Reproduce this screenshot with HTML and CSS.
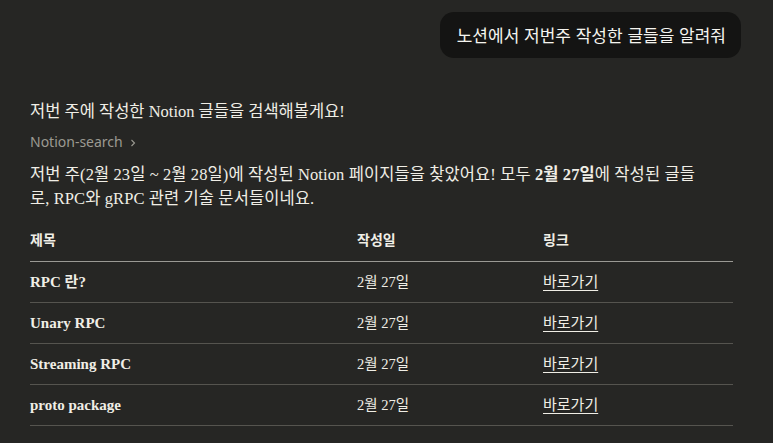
FILE: index.html
```html
<!DOCTYPE html>
<html lang="ko">
<head>
<meta charset="utf-8">
<link rel="stylesheet" href="styles.css">
</head>
<body>
<div class="chat">
  <div class="user-row">
    <div class="bubble">노션에서 저번주 작성한 글들을 알려줘</div>
  </div>
  <div class="reply">
    <p class="lead">저번 주에 작성한 Notion 글들을 검색해볼게요!</p>
    <div class="tool">Notion-search <svg class="chev" width="8" height="10" viewBox="0 0 8 10"><path d="M2.5 2 L5.5 5 L2.5 8" fill="none" stroke="currentColor" stroke-width="1.1"/></svg></div>
    <p class="text">저번 주(2월 23일 ~ 2월 28일)에 작성된 Notion 페이지들을 찾았어요! 모두 <strong>2월 27일</strong>에 작성된 글들로, RPC와 gRPC 관련 기술 문서들이네요.</p>
    <table class="posts">
      <colgroup><col class="c1"><col class="c2"><col class="c3"></colgroup>
      <thead>
        <tr><th>제목</th><th>작성일</th><th>링크</th></tr>
      </thead>
      <tbody>
        <tr><td class="title">RPC 란?</td><td class="date">2월 27일</td><td><a class="link">바로가기</a></td></tr>
        <tr><td class="title">Unary RPC</td><td class="date">2월 27일</td><td><a class="link">바로가기</a></td></tr>
        <tr><td class="title">Streaming RPC</td><td class="date">2월 27일</td><td><a class="link">바로가기</a></td></tr>
        <tr><td class="title">proto package</td><td class="date">2월 27일</td><td><a class="link">바로가기</a></td></tr>
      </tbody>
    </table>
  </div>
</div>
</body>
</html>
```

FILE: styles.css
```css
html, body {
  margin: 0;
  padding: 0;
  background: #262624;
  color: #f0eee6;
  font-family: "Liberation Serif", "Noto Sans CJK KR", serif;
}
.chat {
  width: 773px;
  height: 443px;
  overflow: hidden;
}
.user-row {
  display: flex;
  justify-content: flex-end;
  padding: 12px 32px 0 0;
}
.bubble {
  background: #141413;
  border-radius: 14px;
  padding: 12px 15px 12px 17px;
  font-family: "Noto Sans CJK KR", "Noto Sans", sans-serif;
  font-size: 17px;
  line-height: 22px;
  color: #f5f4ef;
}
.reply {
  padding: 42px 40px 0 30px;
}
.lead {
  margin: 0;
  font-size: 16.5px;
  line-height: 24px;
}
.tool {
  margin-top: 8px;
  font-family: "Noto Sans", "Noto Sans CJK KR", sans-serif;
  font-size: 14px;
  line-height: 20px;
  color: #9c9a92;
  display: flex;
  align-items: center;
  gap: 6px;
}
.chev { margin-top: 1px; }
.text {
  margin: 11px 0 0;
  max-width: 672px;
  font-size: 16.5px;
  line-height: 24px;
  letter-spacing: 0.1px;
}
.text strong { font-weight: 700; }
.posts {
  margin-top: 10px;
  width: 703px;
  border-collapse: collapse;
  table-layout: fixed;
  font-size: 15px;
  line-height: 20px;
}
.c1 { width: 327px; }
.c2 { width: 186px; }
.c3 { width: 190px; }
.posts th {
  text-align: left;
  font-size: 14px;
  font-weight: 600;
  padding: 10px 0;
  border-bottom: 1px solid #9a9994;
}
.posts td {
  padding: 10px 0;
  border-bottom: 1px solid #55544f;
}
.posts td.title { font-weight: 700; }
.posts td.date { font-size: 14.5px; }
.link {
  color: #f0eee6;
  text-decoration: underline;
  text-underline-offset: 3px;
}
```
